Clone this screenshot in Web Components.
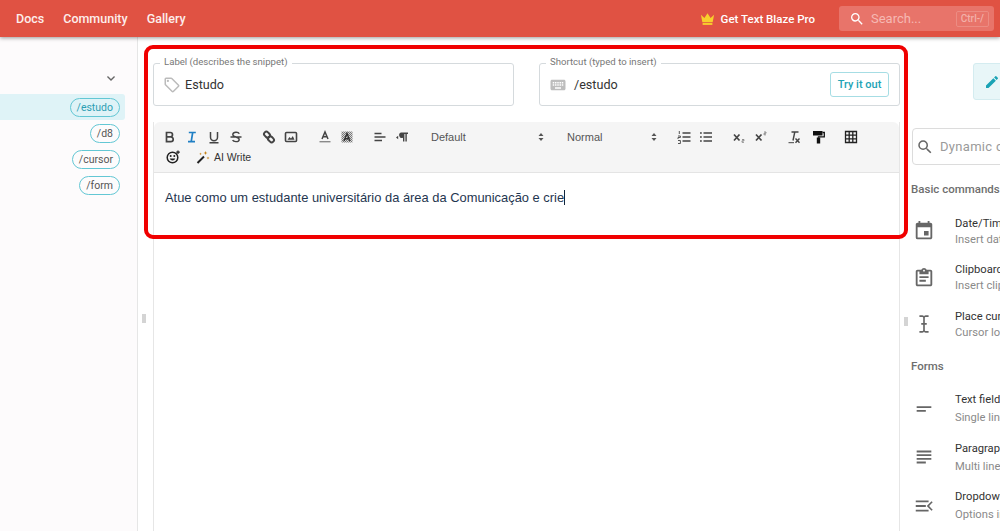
<!DOCTYPE html>
<html>
<head>
<meta charset="utf-8">
<style>
  html, body { margin: 0; height: 100%; overflow: hidden; background: #fff; font-family: Roboto, sans-serif; }
</style>
</head>
<body>
<app-shell>
  <top-bar slot="top"></top-bar>
  <snippet-list slot="left">
    <snippet-chip active>/estudo</snippet-chip>
    <snippet-chip>/d8</snippet-chip>
    <snippet-chip>/cursor</snippet-chip>
    <snippet-chip>/form</snippet-chip>
  </snippet-list>
  <snippet-editor slot="main"></snippet-editor>
  <command-panel slot="right">
    <command-group>Basic commands</command-group>
    <command-item icon="calendar" title="Date/Time" desc="Insert date"></command-item>
    <command-item icon="clipboard" title="Clipboard" desc="Insert clipboard"></command-item>
    <command-item icon="cursor" title="Place cursor" desc="Cursor location"></command-item>
    <command-group forms>Forms</command-group>
    <command-item tall icon="field" title="Text field" desc="Single line"></command-item>
    <command-item tall icon="para" title="Paragraph" desc="Multi line"></command-item>
    <command-item tall icon="drop" title="Dropdown" desc="Options in"></command-item>
  </command-panel>
</app-shell>
<script>
// small helper, every component does the same thing in its constructor
function shadow(el, html) {
  el.attachShadow({ mode: 'open' });
  el.shadowRoot.innerHTML = html;
}

class AppShell extends HTMLElement {
  constructor() {
    super();
    shadow(this, `
      <style>
        :host { display: grid; grid-template-rows: 37px 1fr; height: 531px; position: relative; overflow: hidden; }
        .body { display: grid; grid-template-columns: 138px 762px 100px; min-height: 0; }
        .top { display: block; position: relative; z-index: 2; }
        .handle { position: absolute; width: 4px; height: 9px; background: #d4d4d4; }
        .mark { position: absolute; left: 144px; top: 45px; width: 756px; height: 186px; border: 4px solid #f00000; border-radius: 9px; z-index: 3; }
      </style>
      <div class="top"><slot name="top"></slot></div>
      <div class="body">
        <slot name="left"></slot>
        <slot name="main"></slot>
        <slot name="right"></slot>
      </div>
      <div class="handle" style="left:142px;top:314px"></div>
      <div class="handle" style="left:904px;top:317px"></div>
      <div class="mark"></div>
    `);
  }
}

class TopBar extends HTMLElement {
  constructor() {
    super();
    shadow(this, `
      <style>
        :host { display: flex; align-items: center; height: 37px; background: #e05243; color: #fff; box-shadow: 0 1px 4px rgba(0,0,0,.4); font: 500 12.500px Roboto, sans-serif; padding-left: 16px; box-sizing: border-box; }
        nav { display: flex; gap: 19px; flex: 1; color: #fdeeec; }
        .pro { display: flex; align-items: center; gap: 6px; margin-right: 24px; font-size: 11.500px; font-weight: 500; }
        .search { display: flex; align-items: center; width: 155px; height: 25px; box-sizing: border-box; margin-right: 6px; background: #e8746a; border-radius: 3px; padding: 0 5px 0 10px; color: #f6b9b3; font-size: 13px; font-weight: 400; }
        .search span { flex: 1; margin-left: 6px; }
        kbd { font: 500 10px Roboto, sans-serif; border: 1px solid #ec8c83; border-radius: 2px; padding: 1px 4px 2px; color: #f3b0a9; }
      </style>
      <nav><span>Docs</span><span>Community</span><span>Gallery</span></nav>
      <div class="pro">
        <svg width="15" height="14" viewBox="0 0 16 14"><path d="M1 2.500l3.700 3.500L8 .8l3.300 5.200L15 2.500l-1.500 8h-11z" fill="#f8cf2c"/><rect x="2.800" y="11.300" width="10.400" height="2" fill="#f8cf2c"/></svg>
        <span>Get Text Blaze Pro</span>
      </div>
      <div class="search">
        <svg width="16" height="16" viewBox="0 0 24 24" fill="#fff"><path d="M15.500 14h-.79l-.28-.27A6.470 6.470 0 0 0 16 9.500 6.500 6.500 0 1 0 9.500 16c1.610 0 3.090-.59 4.230-1.570l.27.28v.79l5 4.990L20.490 19l-4.990-5zm-6 0C7.010 14 5 11.990 5 9.500S7.010 5 9.500 5 14 7.010 14 9.500 11.990 14 9.500 14z"/></svg>
        <span>Search...</span><kbd>Ctrl-/</kbd>
      </div>
    `);
  }
}

class SnippetList extends HTMLElement {
  constructor() {
    super();
    shadow(this, `
      <style>
        :host { display: flex; flex-direction: column; background: #fdfbfc; border-right: 1px solid #e6e6e6; padding-top: 34px; box-sizing: border-box; height: 494px; }
        .arrow { height: 23px; padding-left: 103px; }
        svg { display: block; }
      </style>
      <div class="arrow"><svg width="16" height="16" viewBox="0 0 24 24" fill="#666"><path d="M7.410 7.590 12 12.170l4.590-4.580L18 9l-6 6-6-6z"/></svg></div>
      <slot></slot>
    `);
  }
}

class SnippetChip extends HTMLElement {
  constructor() {
    super();
    shadow(this, `
      <style>
        :host { display: flex; justify-content: flex-end; align-items: center; height: 26px; width: 125px; padding-right: 5px; box-sizing: border-box; border-radius: 0 3px 3px 0; font: 400 10.500px Roboto, sans-serif; color: #555; }
        :host([active]) { background: #dff3f7; color: #2e9fb4; }
        span { display: block; height: 19px; line-height: 17px; padding: 0 6px; border: 1px solid #63c7d4; border-radius: 10px; box-sizing: border-box; }
      </style>
      <span><slot></slot></span>
    `);
  }
}

class OutlinedField extends HTMLElement {
  constructor() {
    super();
    shadow(this, `
      <style>
        :host { display: flex; align-items: center; position: relative; height: 43px; box-sizing: border-box; border: 1px solid #d5dadd; border-radius: 3px; padding: 0 10px 0 9px; font: 400 12.600px Roboto, sans-serif; color: #333; }
        .legend { position: absolute; left: 6px; top: -8px; padding: 0 4px; background: #fff; font-size: 9.600px; line-height: 12px; color: #777; }
        .icon { display: flex; align-items: center; }
        .value { flex: 1; }
      </style>
      <span class="legend"></span>
      <span class="icon"><slot name="icon"></slot></span>
      <span class="value"></span>
      <slot name="action"></slot>
    `);
    this.shadowRoot.querySelector('.legend').textContent = this.getAttribute('label');
    this.shadowRoot.querySelector('.value').textContent = this.getAttribute('value');
  }
}

class TryButton extends HTMLElement {
  constructor() {
    super();
    shadow(this, `
      <style>
        :host { display: block; height: 25px; width: 59px; box-sizing: border-box; text-align: center; border: 1px solid #a6dde4; border-radius: 3px; color: #22a3b5; font: 500 11px/23px Roboto, sans-serif; }
      </style>
      <slot></slot>
    `);
  }
}

const G = '#444';
const toolIcons = {
  bold: `<path d="M3.500 2.500h3.800a2.200 2.200 0 0 1 0 4.400H3.500zm0 4.400h4.300a2.400 2.400 0 0 1 0 4.800H3.500z" fill="none" stroke="${G}" stroke-width="1.700"/>`,
  italic: `<path d="M3.800 2.500h7M3 11.700h7M7.700 2.500 6.200 11.700" fill="none" stroke="#1f7fc4" stroke-width="1.700"/>`,
  underline: `<path d="M3.500 2v5.300a3.500 3.500 0 0 0 7 0V2M2.500 12.700h9" fill="none" stroke="${G}" stroke-width="1.500"/>`,
  strike: `<path d="M10.300 3.700C9.300 1.700 4.200 1.800 3.800 4.300c-.2 1.300 1.200 2 3.200 2.700 2 .7 3.400 1.400 3.200 2.800-.4 2.400-5.500 2.400-6.600.4M1.500 7h11" fill="none" stroke="${G}" stroke-width="1.400"/>`,
  link: `<g fill="none" stroke="${G}" stroke-width="2"><rect x="1.800" y="2.300" width="6.500" height="4.600" rx="2.300" transform="rotate(45 5 4.600)"/><rect x="5.700" y="7.100" width="6.500" height="4.600" rx="2.300" transform="rotate(45 9 9.400)"/></g>`,
  image: `<rect x="1.500" y="2.500" width="11" height="9" rx="1" fill="none" stroke="${G}" stroke-width="1.600"/><path d="M3.500 9.700 5.500 7l1.500 1.500L8.800 6l1.700 3.700z" fill="${G}"/>`,
  color: `<path d="M4 9 7 2l3 7M5 6.700h4" fill="none" stroke="${G}" stroke-width="1.500"/><rect x="1.500" y="11" width="11" height="1.400" fill="#8a8a8a"/>`,
  bg: `<defs><pattern id="dots" width="2" height="2" patternUnits="userSpaceOnUse"><rect width="2" height="2" fill="#d8d8d8"/><rect width="1" height="1" fill="#777"/><rect x="1" y="1" width="1" height="1" fill="#777"/></pattern></defs><rect x="1.500" y="1.500" width="11" height="11" fill="url(#dots)"/><path d="M4 11 7 3.500l3 7.500M5 8.700h4" fill="none" stroke="#333" stroke-width="1.400"/>`,
  align: `<path d="M1.500 3.500h7M1.500 7h11M1.500 10.500h7.500" fill="none" stroke="${G}" stroke-width="1.700"/>`,
  para: `<path d="M1 7.500l2.200-1.800v3.600z" fill="${G}"/><path d="M6 2.500h7v1.500h-1.200v7.500h-1.400V4H9.400v7.500H8V7.800a2.700 2.700 0 0 1-2-5.300z" fill="${G}"/>`,
  ol: `<path d="M5.500 3h8M5.500 7h8M5.500 11h8" stroke="${G}" stroke-width="1.400"/><path d="M2.300 1v3M1 6h2.400v1.500H1V9M1 10.500h2.400v3H1" fill="none" stroke="${G}" stroke-width=".9"/>`,
  ul: `<path d="M4.500 3h8.500M4.500 7h8.500M4.500 11h8.500M1 3h1.800M1 7h1.800M1 11h1.800" stroke="${G}" stroke-width="1.400"/>`,
  sub: `<path d="M2 4.500l5.500 6M7.500 4.500l-5.500 6" stroke="${G}" stroke-width="1.700"/><path d="M10 9.500h2v1.300h-2V12.300h2" fill="none" stroke="#777" stroke-width=".8"/>`,
  sup: `<path d="M2 4.500l5.500 6M7.500 4.500l-5.500 6" stroke="${G}" stroke-width="1.700"/><path d="M10 2h2v1.300h-2V4.800h2" fill="none" stroke="#777" stroke-width=".8"/>`,
  clear: `<path d="M4.500 2h7M7.800 2 6 10.500" fill="none" stroke="${G}" stroke-width="1.400"/><path d="M1.500 12.700h5.500" stroke="${G}" stroke-width="1"/><path d="M8.500 8.500l4 4.300M12.500 8.500l-4 4.300" stroke="${G}" stroke-width="1.400"/>`,
  roller: `<path d="M2 1h9.500v4.500H2z" fill="#111"/><path d="M11.500 2.500h1.800v4.300H7.500v1" fill="none" stroke="#111" stroke-width="1.300"/><rect x="5.800" y="7.500" width="3.400" height="6" fill="#111"/>`,
  table: `<path d="M1.500 1.500h11v11h-11zM1.500 5.200h11M1.500 8.800h11M5.200 1.500v11M8.800 1.500v11" fill="none" stroke="#222" stroke-width="1.300"/>`,
  emoji: `<circle cx="6.500" cy="7.500" r="5.300" fill="none" stroke="#222" stroke-width="1.500"/><circle cx="4.700" cy="6" r="1" fill="#222"/><circle cx="8.300" cy="6" r="1" fill="#222"/><path d="M3.700 8.500a3 3 0 0 0 5.600 0z" fill="#222"/><path d="M12 .5v3.500M10.200 2.200h3.600" stroke="#222" stroke-width="1.200"/>`,
  wand: `<path d="M1.500 13 8 6.500" stroke="#222" stroke-width="2"/><path d="M9.500 1l.6 1.500 1.400.5-1.400.5-.6 1.500-.6-1.500L7.500 3l1.400-.5zM12 6.500l.4 1.100 1.100.4-1.100.4-.4 1.100-.4-1.100-1.100-.4 1.100-.4zM4.500 2.500l.4 1 1 .4-1 .4-.4 1-.4-1-1-.4 1-.4z" fill="#c9861c"/>`
};

class ToolIcon extends HTMLElement {
  constructor() {
    super();
    shadow(this, `
      <style>
        :host { display: flex; justify-content: center; align-items: center; flex: none; width: 22px; height: 20px; }
        svg { display: block; }
      </style>
      <svg width="14" height="14" viewBox="0 0 14 14">${toolIcons[this.getAttribute('name')]}</svg>
    `);
  }
}

class ToolSelect extends HTMLElement {
  constructor() {
    super();
    shadow(this, `
      <style>
        :host { display: flex; align-items: center; justify-content: space-between; font: 400 11px "Liberation Sans", Arial, sans-serif; color: #555; box-sizing: border-box; }
        svg { display: block; }
      </style>
      <span><slot></slot></span>
      <svg width="6" height="8" viewBox="0 0 6 8" fill="#555"><path d="M3 0l2.500 3h-5zM3 8 .5 5h5z"/></svg>
    `);
  }
}

class RichToolbar extends HTMLElement {
  constructor() {
    super();
    shadow(this, `
      <style>
        :host { display: block; height: 51px; box-sizing: border-box; background: #f5f5f5; border-bottom: 1px solid #e4e4e4; border-radius: 6px 6px 0 0; padding: 5px 0 0 5px; }
        .row { display: flex; align-items: center; height: 20px; }
        .g { display: flex; align-items: center; margin-right: 11px; }
        .ai { font: 400 10.500px "Liberation Sans", Arial, sans-serif; color: #333; }
      </style>
      <div class="row">
        <div class="g"><tool-icon name="bold"></tool-icon><tool-icon name="italic"></tool-icon><tool-icon name="underline"></tool-icon><tool-icon name="strike"></tool-icon></div>
        <div class="g" style="margin-right:12px"><tool-icon name="link"></tool-icon><tool-icon name="image"></tool-icon></div>
        <div class="g"><tool-icon name="color"></tool-icon><tool-icon name="bg"></tool-icon></div>
        <div class="g" style="margin-right:18px"><tool-icon name="align"></tool-icon><tool-icon name="para"></tool-icon></div>
        <tool-select style="width:113px;margin-right:23px">Default</tool-select>
        <tool-select style="width:90px;margin-right:16px">Normal</tool-select>
        <div class="g"><tool-icon name="ol"></tool-icon><tool-icon name="ul"></tool-icon></div>
        <div class="g"><tool-icon name="sub"></tool-icon><tool-icon name="sup"></tool-icon></div>
        <div class="g"><tool-icon name="clear"></tool-icon><tool-icon name="roller" style="margin-left:2px"></tool-icon></div>
        <tool-icon name="table"></tool-icon>
      </div>
      <div class="row">
        <tool-icon name="emoji" style="margin-left:3px;margin-right:8px"></tool-icon>
        <tool-icon name="wand"></tool-icon><span class="ai">AI Write</span>
      </div>
    `);
  }
}

class SnippetEditor extends HTMLElement {
  constructor() {
    super();
    shadow(this, `
      <style>
        :host { display: block; padding: 26px 0 0 15px; box-sizing: border-box; width: 762px; height: 494px; overflow: hidden; }
        .fields { display: grid; grid-template-columns: 361px 361px; gap: 25px; width: 747px; }
        .box { margin-top: 16px; width: 747px; height: 409px; box-sizing: border-box; border: solid #e6e6e6; border-width: 0 1px; }
        .text { padding: 16px 11px; font: 400 12.900px/18px "Liberation Sans", Arial, sans-serif; color: #1f3650; }
        .caret { display: inline-block; width: 1px; height: 15px; background: #12263c; vertical-align: -3px; }
        .tag { margin-right: 4px; }
        .keys { margin-right: 7px; }
      </style>
      <div class="fields">
        <outlined-field label="Label (describes the snippet)" value="Estudo">
          <svg class="tag" slot="icon" width="18" height="18" viewBox="0 0 24 24" fill="#bbb"><path d="m21.410 11.580-9-9A2 2 0 0 0 11 2H4a2 2 0 0 0-2 2v7c0 .55.220 1.050.590 1.420l9 9c.36.360.86.580 1.410.580s1.050-.220 1.410-.590l7-7c.37-.360.590-.860.590-1.410s-.230-1.060-.590-1.420zM13 20.010 4 11V4h7v-.010l9 9-7 7.020zM6.500 5A1.500 1.500 0 1 1 6.500 8a1.500 1.500 0 0 1 0-3z"/></svg>
        </outlined-field>
        <outlined-field label="Shortcut (typed to insert)" value="/estudo">
          <svg class="keys" slot="icon" width="18" height="18" viewBox="0 0 24 24" fill="#bdbdbd"><path d="M20 5H4c-1.100 0-1.990.9-1.990 2L2 17c0 1.100.9 2 2 2h16c1.100 0 2-.9 2-2V7c0-1.100-.9-2-2-2zm-9 3h2v2h-2V8zm0 3h2v2h-2v-2zM8 8h2v2H8V8zm0 3h2v2H8v-2zm-1 2H5v-2h2v2zm0-3H5V8h2v2zm9 7H8v-2h8v2zm0-4h-2v-2h2v2zm0-3h-2V8h2v2zm3 3h-2v-2h2v2zm0-3h-2V8h2v2z"/></svg>
          <try-button slot="action">Try it out</try-button>
        </outlined-field>
      </div>
      <div class="box">
        <rich-toolbar></rich-toolbar>
        <div class="text">Atue como um estudante universitário da área da Comunicação e crie<span class="caret"></span></div>
      </div>
    `);
  }
}

class CommandPanel extends HTMLElement {
  constructor() {
    super();
    shadow(this, `
      <style>
        :host { display: block; width: 100px; height: 494px; overflow: hidden; box-sizing: border-box; padding: 26px 0 0 12px; }
        .pen { display: flex; align-items: center; width: 60px; height: 37px; box-sizing: border-box; margin-left: 61px; padding-left: 10px; background: #e8f6f8; border: 1px solid #d4ecf0; border-radius: 3px; }
        .search { display: flex; align-items: center; width: 150px; height: 37px; margin-top: 28px; box-sizing: border-box; border: 1px solid #dcdcdc; border-radius: 4px; padding-left: 3px; font: 400 13px Roboto, sans-serif; color: #9a9a9a; white-space: nowrap; letter-spacing: .3px; }
        .search svg { flex: none; }
        .search span { margin-left: 6px; }
      </style>
      <div class="pen"><svg width="16" height="16" viewBox="0 0 24 24" fill="#1aa3b5"><path d="M3 17.250V21h3.750L17.810 9.940l-3.750-3.750L3 17.250zM20.710 7.040a1 1 0 0 0 0-1.410l-2.340-2.340a1 1 0 0 0-1.410 0l-1.830 1.830 3.750 3.750 1.830-1.830z"/></svg></div>
      <div class="search">
        <svg width="18" height="18" viewBox="0 0 24 24" fill="#666"><path d="M15.500 14h-.79l-.28-.27A6.470 6.470 0 0 0 16 9.500 6.500 6.500 0 1 0 9.500 16c1.610 0 3.090-.59 4.230-1.570l.27.28v.79l5 4.990L20.490 19l-4.990-5zm-6 0C7.010 14 5 11.990 5 9.500S7.010 5 9.500 5 14 7.010 14 9.500 11.990 14 9.500 14z"/></svg>
        <span>Dynamic commands</span>
      </div>
      <slot></slot>
    `);
  }
}

class CommandGroup extends HTMLElement {
  constructor() {
    super();
    shadow(this, `
      <style>
        :host { display: block; height: 21px; margin: 14px 0 8px -1px; font: 500 11.500px/21px Roboto, sans-serif; color: #6e6e6e; white-space: nowrap; }
        :host([forms]) { margin: 8px 0 8px -1px; }
      </style>
      <slot></slot>
    `);
  }
}

const cmdIcons = {
  calendar: 'M17 12h-5v5h5v-5zM16 1v2H8V1H6v2H5c-1.110 0-1.990.9-1.990 2L3 19a2 2 0 0 0 2 2h14c1.100 0 2-.9 2-2V5c0-1.100-.9-2-2-2h-1V1h-2zm3 18H5V8h14v11z',
  clipboard: 'M19 3h-4.180C14.400 1.840 13.300 1 12 1s-2.400.84-2.820 2H5c-1.100 0-2 .9-2 2v14c0 1.100.9 2 2 2h14c1.100 0 2-.9 2-2V5c0-1.100-.9-2-2-2zm-7 0c.55 0 1 .45 1 1s-.45 1-1 1-1-.45-1-1 .45-1 1-1zm7 16H5V5h2v3h10V5h2v14zM7 10h10v2H7zm0 4h7v2H7z',
  cursor: 'M7 2.500h3c1 0 1.600.4 2 1 .4-.6 1-1 2-1h3v1.800h-3c-.8 0-1.100.4-1.100 1.100V11H15v1.800h-2.100v5.800c0 .7.300 1.100 1.100 1.100h3v1.800h-3c-1 0-1.600-.4-2-1-.4.6-1 1-2 1H7v-1.800h3c.8 0 1.100-.4 1.100-1.100v-5.800H9V11h2.100V5.400c0-.7-.3-1.100-1.100-1.100H7z',
  field: 'M4 9h16v2H4zM4 13h10v2H4z',
  para: 'M4 5h16v2H4zM4 9h16v2H4zM4 13h16v2H4zM4 17h10v2H4z',
  drop: 'M3 6h14v2H3zM3 11h11v2H3zM3 16h14v2H3zM21.500 8l-4 4 4 4-1.300 1.200L15 12l5.200-5.200z'
};

class CommandItem extends HTMLElement {
  constructor() {
    super();
    shadow(this, `
      <style>
        :host { display: flex; align-items: center; height: 46.500px; font: 400 11.200px Roboto, sans-serif; white-space: nowrap; }
        :host([tall]) { height: 48.500px; }
        :host([tall]) .d { margin-top: 2px; }
        svg { display: block; flex: none; margin-right: 20px; margin-left: 1px; }
        .t { color: #333; line-height: 16px; }
        .d { color: #8a8a8a; line-height: 15px; }
      </style>
      <svg width="22" height="22" viewBox="0 0 24 24" fill="#666"><path d="${cmdIcons[this.getAttribute('icon')]}"/></svg>
      <div><div class="t">${this.getAttribute('title')}</div><div class="d">${this.getAttribute('desc')}</div></div>
    `);
  }
}

customElements.define('app-shell', AppShell);
customElements.define('top-bar', TopBar);
customElements.define('snippet-list', SnippetList);
customElements.define('snippet-chip', SnippetChip);
customElements.define('outlined-field', OutlinedField);
customElements.define('try-button', TryButton);
customElements.define('tool-icon', ToolIcon);
customElements.define('tool-select', ToolSelect);
customElements.define('rich-toolbar', RichToolbar);
customElements.define('snippet-editor', SnippetEditor);
customElements.define('command-panel', CommandPanel);
customElements.define('command-group', CommandGroup);
customElements.define('command-item', CommandItem);
</script>
</body>
</html>
